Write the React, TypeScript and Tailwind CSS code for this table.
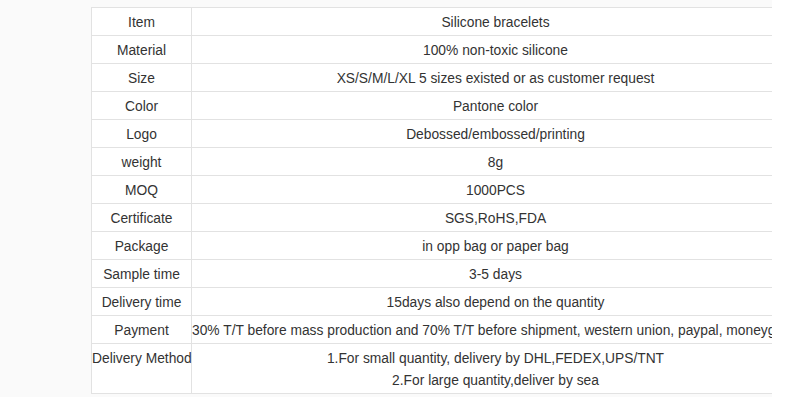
import React from 'react';

const rows: [string, string][] = [
    ['Item', 'Silicone bracelets'],
    ['Material', '100% non-toxic silicone'],
    ['Size', 'XS/S/M/L/XL 5 sizes existed or as customer request'],
    ['Color', 'Pantone color'],
    ['Logo', 'Debossed/embossed/printing'],
    ['weight', '8g'],
    ['MOQ', '1000PCS'],
    ['Certificate', 'SGS,RoHS,FDA'],
    ['Package', 'in opp bag or paper bag'],
    ['Sample time', '3-5 days'],
    ['Delivery time', '15days also depend on the quantity'],
    ['Payment', '30% T/T before mass production and 70% T/T before shipment, western union, paypal, moneygram'],
];

const App: React.FC = () => {
    return (
        <div className="w-[800px] h-[402px] bg-white overflow-hidden" style={{ fontFamily: '"Liberation Sans", Arial, sans-serif' }}>
            <div className="w-[772px] h-[397px] bg-[#fafafa] overflow-hidden pt-[7px] pl-[91px]">
                <table className="table-fixed border-collapse bg-white text-[13.8px] text-[#333] w-[708px]">
                    <colgroup>
                        <col className="w-[100px]" />
                        <col className="w-[608px]" />
                    </colgroup>
                    <tbody>
                        {rows.map(([label, value]) => (
                            <tr key={label} className="h-[28px]">
                                <td className="border border-[#e2e2e2] text-center leading-[22px] pt-[2px] pb-0 px-0 whitespace-nowrap">{label}</td>
                                <td className="border border-[#e2e2e2] text-center leading-[22px] pt-[2px] pb-0 px-0 whitespace-nowrap">{value}</td>
                            </tr>
                        ))}
                        <tr className="h-[50px]">
                            <td className="border border-[#e2e2e2] text-center align-top leading-[22px] pt-[4px] px-0 whitespace-nowrap">Delivery Method</td>
                            <td className="border border-[#e2e2e2] text-center align-top leading-[22px] pt-[4px] px-0">
                                <div>1.For small quantity, delivery by DHL,FEDEX,UPS/TNT</div>
                                <div>2.For large quantity,deliver by sea</div>
                            </td>
                        </tr>
                    </tbody>
                </table>
            </div>
        </div>
    );
};

export default App;
